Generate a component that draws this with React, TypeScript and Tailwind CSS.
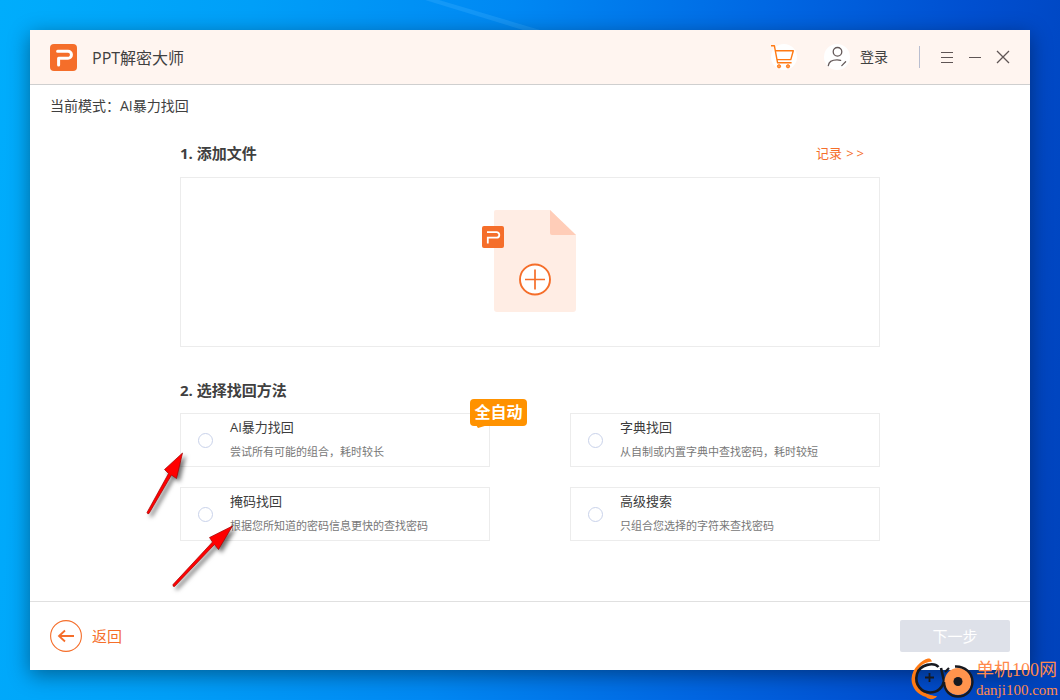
import { ReactNode } from "react";

type Method = { id: string; title: string; desc: string; badge?: string };

const methods: Method[] = [
  { id: "ai", title: "AI暴力找回", desc: "尝试所有可能的组合，耗时较长", badge: "全自动" },
  { id: "dict", title: "字典找回", desc: "从自制或内置字典中查找密码，耗时较短" },
  { id: "mask", title: "掩码找回", desc: "根据您所知道的密码信息更快的查找密码" },
  { id: "advanced", title: "高级搜索", desc: "只组合您选择的字符来查找密码" },
];

function Logo() {
  return (
    <svg className="size-[27px]" viewBox="0 0 27 27" fill="none" aria-hidden="true">
      <rect width="27" height="27" rx="4" fill="#f56e2a" />
      <path d="M7.6 7.300H18A3.300 3.300 0 0 1 18 14.200H8.600V21" stroke="#fff" strokeWidth="3" strokeLinecap="round" strokeLinejoin="round" />
    </svg>
  );
}

function CartIcon() {
  return (
    <svg className="size-7" viewBox="0 0 28 28" fill="none" aria-hidden="true">
      <circle cx="15" cy="14" r="13" fill="#fff" />
      <g stroke="#ff7a14" strokeWidth="1.4" strokeLinejoin="round">
        <path d="M2 2.800H5.4L8.6 19.8H22.6" />
        <path d="M6.4 7.7H24.3L21.8 16.6H8" />
      </g>
      <g stroke="#ff7a14" fill="#ff9a4d">
        <circle cx="10" cy="23.3" r="1.6" />
        <circle cx="19" cy="23.3" r="1.6" />
      </g>
    </svg>
  );
}

function UserIcon() {
  return (
    <svg className="size-7" viewBox="0 0 28 28" fill="none" aria-hidden="true">
      <circle cx="14" cy="14" r="13" fill="#fff" />
      <g stroke="#655a5a" strokeWidth="1.3" strokeLinecap="round">
        <circle cx="14.5" cy="8.8" r="4.3" />
        <path d="M5.3 22.6C5.8 18.9 9.6 16.9 14 16.9C15.5 16.9 16.6 17 17.6 17.4" />
        <path d="M18.8 22.6L22.6 18.8" />
      </g>
    </svg>
  );
}

function AddFileIcon() {
  return (
    <svg className="h-[104px] w-24" viewBox="0 0 96 104" fill="none" aria-hidden="true">
      <path d="M14 0H68L94 25V99A3 3 0 0 1 91 102H15A3 3 0 0 1 12 99V2A2 2 0 0 1 14 0Z" fill="#ffede4" />
      <path d="M68 0L94 25H70A2 2 0 0 1 68 23Z" fill="#ffcdb8" />
      <rect x="0" y="16" width="22" height="22" rx="2" fill="#f56e2a" />
      <path d="M5 22.2H14.6A2.6 2.6 0 0 1 14.6 27.6H5.8V33.5" stroke="#fff" strokeWidth="1.8" />
      <circle cx="53" cy="69.5" r="15" fill="#fff" stroke="#f56e2a" strokeWidth="1.9" />
      <path d="M43 69.5H63M53 59.5V79.5" stroke="#f56e2a" strokeWidth="1.7" />
    </svg>
  );
}

function WindowButton({ label, children }: { label: string; children: ReactNode }) {
  return (
    <button type="button" aria-label={label} className="flex size-7 items-center justify-center">
      <svg className="size-[14px]" viewBox="0 0 14 14" fill="none" stroke="#5f5555" strokeWidth="1" aria-hidden="true">
        {children}
      </svg>
    </button>
  );
}

function MethodCard({ method }: { method: Method }) {
  return (
    <label
      htmlFor={method.id}
      className="relative flex h-[54px] items-center gap-[17px] border border-[#ececec] pl-[17px]"
    >
      <input
        id={method.id}
        type="radio"
        name="method"
        className="size-[15px] shrink-0 appearance-none rounded-full border border-[#c9d2ea] bg-white checked:border-4 checked:border-[#f56e2a]"
      />
      <span className="flex flex-col gap-2 pb-[3px]">
        <span className="text-[13px] leading-[18px] text-[#3c3c3c]">{method.title}</span>
        <span className="text-[11px] leading-4 text-[#777]">{method.desc}</span>
      </span>
      {method.badge && (
        <span className="absolute -top-[15px] -right-[38px] h-[27px] w-[57px] rounded bg-[#ff9200] text-center text-base leading-[27px] font-bold text-white">
          {method.badge}
          <svg className="absolute top-[26px] left-[6px] h-[3px] w-3" viewBox="0 0 12 3" aria-hidden="true">
            <path d="M0 0H12L2 3Z" fill="#ff9200" />
          </svg>
        </span>
      )}
    </label>
  );
}

function Pointers() {
  return (
    <svg
      className="pointer-events-none absolute top-[420px] left-[110px] h-[144px] w-[100px] drop-shadow-[3px_3px_2px_rgba(0,0,0,0.55)]"
      viewBox="0 0 100 144"
      aria-hidden="true"
    >
      <g fill="#f00" stroke="#a00000" strokeWidth="0.7">
        <path d="M42.5 3L36.500 28.5L31.500 25L9 63.5Q7.5 64.5 7 62.5L28.500 23.500L24.500 19.5Z" />
        <path d="M92.5 76L78.5 99.500L74.5 94.5L34.5 136.5Q32.5 137 33 134.5L72.5 92L69.5 87.5Z" />
      </g>
    </svg>
  );
}

function Watermark() {
  return (
    <div className="absolute right-[2px] bottom-0 flex items-end gap-[2px]">
      <svg className="h-[43px] w-[63px]" viewBox="0 0 63 43" fill="none" aria-hidden="true">
        <path d="M17 1.500C11 3 1 11 0.500 22C0.500 31 7 38 15 40C18 43 24 43 26 39C18 39 5 33 5 21C5 11 12 5 21 4.500C20 2 19 1.500 17 1.500Z" fill="#ff7a14" />
        <path d="M27.500 10C23 5 9 7 6 17C3 28 11 35.500 19 35.500C27 35.500 32 30 33 24L30 11" stroke="#17191f" strokeWidth="2.6" />
        <path d="M34 15L38 11" stroke="#17191f" strokeWidth="2.2" />
        <path d="M14 20.500H23M18.500 16V25" stroke="#17191f" strokeWidth="1.8" />
        <circle cx="47" cy="24.500" r="13.500" fill="#ff944d" />
        <path d="M44 9.500C54 9 61.500 16 61.500 25C61 34 55 39.500 47 39.500C39 39.500 33.500 34 33 25" stroke="#17191f" strokeWidth="2.4" />
        <circle cx="47" cy="24.500" r="4.500" fill="#17191f" />
      </svg>
      <div className="flex flex-col font-['Liberation_Serif','Noto_Sans_CJK_SC',serif] text-[#ff8a4c]">
        <span className="text-lg leading-5">单机100网</span>
        <span className="text-[15px] leading-5">danji100.com</span>
      </div>
    </div>
  );
}

export default function App() {
  return (
    <div className="relative flex min-h-screen flex-col overflow-hidden bg-[linear-gradient(97deg,#00adfc_0%,#009ff8_22%,#0088f3_45%,#0066e2_68%,#004fd0_85%,#0042bb_100%)] p-[30px] font-['Open_Sans','Noto_Sans_CJK_SC',sans-serif] text-[#404040]">
      <svg className="absolute top-0 left-[425px] h-[30px] w-[120px]" viewBox="0 0 120 30" aria-hidden="true">
        <path d="M0 0H14L115 30H98Z" fill="#4cb8ff" fillOpacity="0.25" />
      </svg>
      <main className="relative flex grow flex-col bg-white shadow-[0_5px_20px_rgba(0,0,0,0.4)]">
        <header className="flex h-[55px] items-center border-b border-[#cfcfcf] bg-[#fff5f0] pr-[13px] pl-5">
          <Logo />
          <h1 className="ml-[15px] pt-0.5 text-base">PPT解密大师</h1>
          <div className="ml-auto flex items-center">
            <button type="button" aria-label="购物车"><CartIcon /></button>
            <button type="button" className="ml-[26px] flex items-center gap-[9px] text-sm">
              <UserIcon />
              登录
            </button>
            <span className="mr-[13px] ml-[31px] h-[22px] w-px bg-[#b9bed0]" />
            <WindowButton label="菜单"><path d="M1 2.5H13M1 7.5H13M1 12.5H13" /></WindowButton>
            <WindowButton label="最小化"><path d="M1 7.5H13" /></WindowButton>
            <WindowButton label="关闭"><path d="M1 1L13 13M13 1L1 13" strokeWidth="1.3" /></WindowButton>
          </div>
        </header>
        <p className="px-5 pt-[11px] text-sm leading-5">当前模式：AI暴力找回</p>

        <div className="mx-[150px] flex grow flex-col pt-[26px]">
          <section>
            <div className="flex items-center justify-between pr-4">
              <h2 className="text-[15px] leading-[22px] font-bold">1. 添加文件</h2>
              <a href="#records" className="flex gap-[3px] text-[13px] leading-[22px] text-[#f56e2a]">
                <span className="mr-px">记录</span>
                <span>&gt;</span>
                <span>&gt;</span>
              </a>
            </div>
            <button type="button" aria-label="添加文件" className="mt-[13px] flex h-[170px] w-full items-center justify-center border border-[#ececec]">
              <AddFileIcon />
            </button>
          </section>
          <section className="mt-8">
            <h2 className="text-[15px] leading-[22px] font-bold">2. 选择找回方法</h2>
            <div className="mt-3 grid grid-cols-2 gap-x-20 gap-y-5">
              {methods.map((m) => (
                <MethodCard key={m.id} method={m} />
              ))}
            </div>
          </section>
        </div>

        <footer className="flex h-[69px] items-center justify-between border-t border-[#e0e0e0] px-5">
          <button type="button" className="flex items-center gap-[10px] text-[15px] text-[#f56e2a]">
            <svg className="size-8" viewBox="0 0 32 32" fill="none" stroke="#f56e2a" aria-hidden="true">
              <circle cx="16" cy="16" r="15.4" strokeWidth="1.1" />
              <path d="M24 16H9M15 10.500L9 16L15 21.500" strokeWidth="1.8" />
            </svg>
            返回
          </button>
          <button type="button" disabled className="h-8 w-[110px] rounded-xs bg-[#dee1e9] text-[15px] text-white">
            下一步
          </button>
        </footer>
        <Pointers />
      </main>
      <Watermark />
    </div>
  );
}
